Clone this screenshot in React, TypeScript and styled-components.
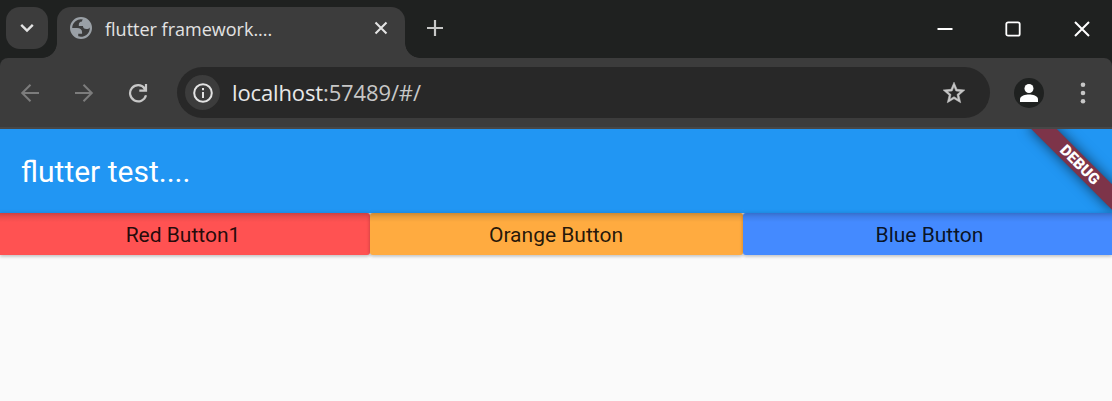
import React from 'react';
import styled, { createGlobalStyle } from 'styled-components';

const GlobalStyle = createGlobalStyle`
  * { box-sizing: border-box; }
  body { margin: 0; background: #fafafa; overflow: hidden; }
`;

const Window = styled.div`
  width: 1112px;
  height: 401px;
  display: flex;
  flex-direction: column;
  overflow: hidden;
  background: #fafafa;
  font-family: 'Open Sans', 'Noto Sans', sans-serif;
`;

const TabStrip = styled.header`
  height: 58px;
  flex: none;
  display: flex;
  background: #1f2120;
`;

const TabSearch = styled.button`
  width: 42px;
  height: 42px;
  margin: 7px 9px 0 6px;
  padding: 0;
  border: 0;
  border-radius: 14px;
  background: #3c3c3c;
  color: #e3e3e3;
  display: grid;
  place-items: center;
`;

const Tab = styled.div`
  position: relative;
  width: 348px;
  height: 51px;
  margin-top: 7px;
  padding: 0 15px 9px 13px;
  display: flex;
  align-items: center;
  border-radius: 14px 14px 0 0;
  background: #3c3c3c;
  color: #e3e3e3;
  &::before,
  &::after {
    content: '';
    position: absolute;
    bottom: 0;
    width: 15px;
    height: 15px;
  }
  &::before {
    left: -15px;
    background: radial-gradient(circle at 0 0, transparent 14.5px, #3c3c3c 15.2px);
  }
  &::after {
    right: -15px;
    background: radial-gradient(circle at 100% 0, transparent 14.5px, #3c3c3c 15.2px);
  }
`;

const TabTitle = styled.span`
  flex: 1;
  margin: 2px 0 0 13px;
  font-size: 18px;
  line-height: 24px;
  letter-spacing: 0;
  font-variant-ligatures: none;
  white-space: nowrap;
`;

const NewTab = styled.div`
  width: 60px;
  height: 56px;
  display: grid;
  place-items: center;
  color: #c7c7c7;
`;

const WindowControls = styled.div`
  margin: 0 -4px 0 auto;
  display: flex;
  height: 58px;
  color: #fff;
`;

const WindowControl = styled.div`
  width: 68.5px;
  display: grid;
  place-items: center;
`;

const Toolbar = styled.nav`
  height: 71px;
  flex: none;
  display: flex;
  align-items: center;
  padding: 0 15px 0 16px;
  background: #3c3c3c;
  border-bottom: 2px solid #474747;
  border-radius: 8px 8px 0 0;
  box-shadow: 0 -8px 0 -0px #1f2120;
  clip-path: inset(0);
`;

const ToolbarBacking = styled.div`
  flex: none;
  background: #1f2120;
`;

const NavIcon = styled.div<{ $dim?: boolean }>`
  width: 28px;
  height: 28px;
  margin-right: 26px;
  display: grid;
  place-items: center;
  color: ${(p) => (p.$dim ? '#7c7c7c' : '#c7c7c7')};
`;

const AddressBar = styled.div`
  width: 813px;
  height: 51px;
  margin-left: -1px;
  padding: 0 23px 0 8px;
  display: flex;
  align-items: center;
  border-radius: 26px;
  background: #282828;
`;

const SiteInfo = styled.div`
  width: 35px;
  height: 35px;
  border-radius: 50%;
  background: #3c3c3c;
  color: #e3e3e3;
  display: grid;
  place-items: center;
`;

const Url = styled.span`
  flex: 1;
  margin: -2px 0 0 12px;
  font-size: 22px;
  line-height: 30px;
  letter-spacing: -0.13px;
  color: #c7c7c7;
  white-space: nowrap;
`;

const Host = styled.span`
  color: #e8e8e8;
`;

const Star = styled.div`
  display: grid;
  color: #c7c7c7;
`;

const Profile = styled.div`
  width: 30px;
  height: 30px;
  margin-left: 24px;
  border-radius: 50%;
  background: #1f2120;
  display: grid;
  place-items: center;
`;

const Menu = styled.div`
  width: 28px;
  margin-left: 25px;
  display: grid;
  place-items: center;
  color: #c7c7c7;
`;

const Page = styled.main`
  position: relative;
  flex: 1;
  overflow: hidden;
  background: #fafafa;
  font-family: Roboto, sans-serif;
`;

const AppBar = styled.div`
  height: 84px;
  padding: 0 21px;
  display: flex;
  align-items: center;
  background: #2196f3;
  color: #fff;
  font-size: 30px;
`;

const ButtonRow = styled.div`
  position: relative;
  display: flex;
  height: 42px;
  &::before {
    content: '';
    position: absolute;
    z-index: 1;
    inset: 0 0 auto;
    height: 9px;
    background: linear-gradient(rgba(0, 0, 0, 0.2), rgba(0, 0, 0, 0.08) 45%, transparent);
  }
`;

const RaisedButton = styled.button<{ $color: string; $width: number; $nudge: number }>`
  width: ${(p) => p.$width}px;
  height: 42px;
  padding: 2px 0 0;
  text-indent: ${(p) => p.$nudge}px;
  border: 0;
  border-radius: 3px;
  background: ${(p) => p.$color};
  color: rgba(0, 0, 0, 0.87);
  font: 400 21px/40px Roboto, sans-serif;
  box-shadow: 0 2px 3px rgba(0, 0, 0, 0.14), 0 0 4px rgba(0, 0, 0, 0.14);
  &:first-child {
    border-radius: 0 3px 3px 0;
  }
  &:last-child {
    border-radius: 3px 0 0 3px;
  }
`;

const BannerClip = styled.div`
  position: absolute;
  z-index: 2;
  top: 0;
  right: 0;
  width: 130px;
  height: 84px;
  overflow: hidden;
`;

const DebugBanner = styled.div`
  position: absolute;
  top: 25px;
  left: 36px;
  width: 120px;
  height: 18px;
  padding-left: 5px;
  transform: rotate(45deg);
  background: #7d3449;
  box-shadow: 0 0 13px rgba(0, 0, 0, 0.6);
  color: #fff;
  font-size: 15.3px;
  font-weight: 900;
  line-height: 18px;
  text-align: center;
`;

const BUTTONS = [
  { label: 'Red Button1', color: '#ff5252', width: 370, nudge: -4 },
  { label: 'Orange Button', color: '#ffab40', width: 373, nudge: -1 },
  { label: 'Blue Button', color: '#448aff', width: 369, nudge: 4 },
];

export default function App() {
  return (
    <Window>
      <GlobalStyle />
      <TabStrip>
        <TabSearch aria-label="Search tabs">
          <svg width="14" height="10" viewBox="0 0 14 10" fill="none" stroke="currentColor" strokeWidth="2.4">
            <path d="M1.2 1.8 7 7.5l5.8-5.7" />
          </svg>
        </TabSearch>
        <Tab>
          <svg width="22" height="22" viewBox="2 2 20 20" fill="#9aa0a6">
            <path
              fillRule="evenodd"
              d="M12 2a10 10 0 1 0 0 20 10 10 0 0 0 0-20zM4 12h4.4c3.407.022 4.922 1.73 4.543 5.127H9.488v2.47a8.004 8.004 0 0 0 10.498-8.083C19.327 12.504 18.332 13 17 13c-2.137 0-3.206-.916-3.206-2.75h-3.748c-.274-2.728.683-4.092 2.87-4.092 0-.975.327-1.597.811-1.97A8.004 8.004 0 0 0 4 12z"
            />
          </svg>
          <TabTitle>flutter framework....</TabTitle>
          <svg width="18" height="18" viewBox="0 0 18 18" stroke="currentColor" strokeWidth="2.1">
            <path d="m3.5 3.5 11 11m0-11-11 11" />
          </svg>
        </Tab>
        <NewTab>
          <svg width="16" height="16" viewBox="0 0 16 16" stroke="currentColor" strokeWidth="2.2">
            <path d="M8 0v16M0 8h16" />
          </svg>
        </NewTab>
        <WindowControls>
          <WindowControl>
            <svg width="16" height="16" viewBox="0 0 16 16" stroke="currentColor" strokeWidth="2">
              <path d="M.5 8h15" />
            </svg>
          </WindowControl>
          <WindowControl>
            <svg width="16" height="16" viewBox="0 0 16 16" fill="none" stroke="currentColor" strokeWidth="1.8">
              <rect x="1.3" y="1.3" width="13.4" height="13.4" rx="1.8" />
            </svg>
          </WindowControl>
          <WindowControl>
            <svg width="16" height="16" viewBox="0 0 16 16" stroke="currentColor" strokeWidth="2">
              <path d="m1 1 14 14M15 1 1 15" />
            </svg>
          </WindowControl>
        </WindowControls>
      </TabStrip>
      <ToolbarBacking>
        <Toolbar>
          <NavIcon $dim>
            <svg width="20" height="20" viewBox="0 0 20 20" fill="none" stroke="currentColor" strokeWidth="2">
              <path d="M19 10H2.5M10.5 1.7 2.2 10l8.3 8.3" />
            </svg>
          </NavIcon>
          <NavIcon $dim>
            <svg width="20" height="20" viewBox="0 0 20 20" fill="none" stroke="currentColor" strokeWidth="2">
              <path d="M1 10h16.5M9.5 1.7l8.3 8.3-8.3 8.3" />
            </svg>
          </NavIcon>
          <NavIcon>
            <svg width="20" height="20" viewBox="0 0 20 20" fill="none" stroke="currentColor" strokeWidth="2.2">
              <path d="M18 12.3A8.1 8.1 0 1 1 16.6 5.3M18 1v6.7h-6.7M17.8 7.2l-2.2-2.7" />
            </svg>
          </NavIcon>
          <AddressBar>
            <SiteInfo>
              <svg width="20" height="20" viewBox="0 0 20 20" fill="none" stroke="currentColor" strokeWidth="2">
                <circle cx="10" cy="10" r="8.8" />
                <path d="M10 9v6M10 5v2.2" />
              </svg>
            </SiteInfo>
            <Url>
              <Host>localhost</Host>:57489/#/
            </Url>
            <Star>
              <svg width="26" height="26" viewBox="0 0 24 24" fill="currentColor" stroke="currentColor" strokeWidth="0.5">
                <path d="M22 9.24l-7.19-.62L12 2 9.19 8.63 2 9.24l5.46 4.73L5.82 21 12 17.27 18.18 21l-1.63-7.03L22 9.24zM12 15.4l-3.76 2.27 1-4.28-3.32-2.88 4.38-.38L12 6.1l1.71 4.04 4.38.38-3.32 2.88 1 4.28L12 15.4z" />
              </svg>
            </Star>
          </AddressBar>
          <Profile>
            <svg width="18" height="18" viewBox="0 0 18 18" fill="#fff">
              <circle cx="9" cy="4.5" r="4.5" />
              <path d="M0 18v-2.8C0 12 5.5 10.6 9 10.6s9 1.4 9 4.6V18z" />
            </svg>
          </Profile>
          <Menu>
            <svg width="6" height="22" viewBox="0 0 6 22" fill="currentColor">
              <circle cx="3" cy="2.7" r="2.3" />
              <circle cx="3" cy="11" r="2.3" />
              <circle cx="3" cy="19.3" r="2.3" />
            </svg>
          </Menu>
        </Toolbar>
      </ToolbarBacking>
      <Page>
        <AppBar>flutter test....</AppBar>
        <ButtonRow>
          {BUTTONS.map((b) => (
            <RaisedButton key={b.label} $color={b.color} $width={b.width} $nudge={b.nudge}>
              {b.label}
            </RaisedButton>
          ))}
        </ButtonRow>
        <BannerClip>
          <DebugBanner>DEBUG</DebugBanner>
        </BannerClip>
      </Page>
    </Window>
  );
}
